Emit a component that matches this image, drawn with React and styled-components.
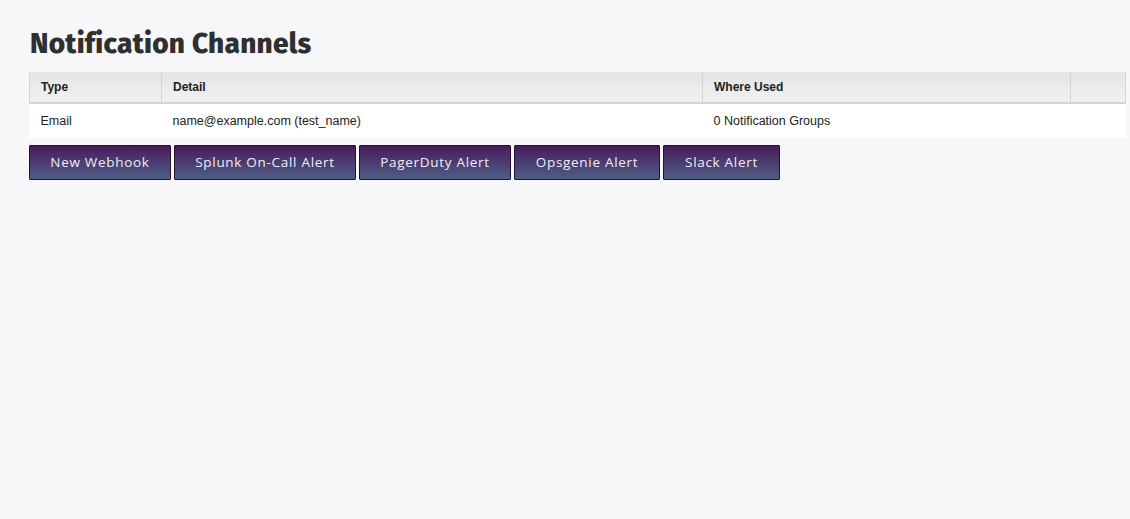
import React from 'react';
import styled, { createGlobalStyle } from 'styled-components';

const COLORS = {
  page: '#f7f7f9',
  text: '#2b2b2b',
  border: '#d4d4d4',
  headTop: '#e4e4e4',
  headBottom: '#f1f1f1',
  btnTop: '#4a1b5c',
  btnBottom: '#4d5e86',
  btnBorder: '#26122f',
};

const GlobalStyle = createGlobalStyle`
  html, body {
    margin: 0;
    padding: 0;
    background: ${COLORS.page};
  }
  body {
    font-family: "Liberation Sans", Arial, sans-serif;
    color: ${COLORS.text};
  }
`;

const Page = styled.main`
  padding: 26px 4px 0 29px;
  min-height: 519px;
  box-sizing: border-box;
`;

const Title = styled.h1`
  margin: 0 0 10px 1px;
  font-family: "Fira Sans", "Lato", sans-serif;
  font-weight: 800;
  font-size: 28px;
  line-height: 36px;
  color: #2f2f2f;
  letter-spacing: 0.3px;
`;

const Table = styled.table`
  width: 1097px;
  border-collapse: collapse;
  font-size: 12.5px;
  background: #fff;
`;

const HeadCell = styled.th`
  height: 31px;
  padding: 0 11px;
  text-align: left;
  font-weight: 700;
  font-size: 12px;
  color: #222;
  background: linear-gradient(${COLORS.headTop}, ${COLORS.headBottom});
  border-left: 1px solid ${COLORS.border};
  border-bottom: 2px solid ${COLORS.border};
  width: ${p => p.$w || 'auto'};
  box-sizing: border-box;
  &:last-child {
    border-right: 1px solid ${COLORS.border};
  }
`;

const Cell = styled.td`
  height: 33px;
  padding: 0 11px 1px;
  color: #222;
`;

const ButtonRow = styled.div`
  display: flex;
  gap: 3px;
  margin-top: 7px;
`;

const Button = styled.button`
  height: 35px;
  padding: 0 0 2px;
  border: 1px solid ${COLORS.btnBorder};
  border-radius: 1px;
  background: linear-gradient(${COLORS.btnTop}, ${COLORS.btnBottom});
  color: #efeef4;
  font-family: "Open Sans", "Liberation Sans", sans-serif;
  font-size: 13.5px;
  font-weight: 500;
  letter-spacing: 0.7px;
  cursor: pointer;
  box-sizing: border-box;
  width: ${p => p.$w}px;
`;

const channels = [
  { type: 'Email', detail: 'name@example.com (test_name)', used: '0 Notification Groups' },
];

const buttons = [
  { label: 'New Webhook', w: 142 },
  { label: 'Splunk On-Call Alert', w: 182 },
  { label: 'PagerDuty Alert', w: 152 },
  { label: 'Opsgenie Alert', w: 146 },
  { label: 'Slack Alert', w: 117 },
];

const App = () => (
  <>
    <GlobalStyle />
    <Page>
      <Title>Notification Channels</Title>
      <Table>
        <thead>
          <tr>
            <HeadCell $w='132px'>Type</HeadCell>
            <HeadCell $w='541px'>Detail</HeadCell>
            <HeadCell $w='368px'>Where Used</HeadCell>
            <HeadCell />
          </tr>
        </thead>
        <tbody>
          {channels.map(c => (
            <tr key={c.detail}>
              <Cell>{c.type}</Cell>
              <Cell>{c.detail}</Cell>
              <Cell>{c.used}</Cell>
              <Cell />
            </tr>
          ))}
        </tbody>
      </Table>
      <ButtonRow>
        {buttons.map(b => (
          <Button key={b.label} $w={b.w}>{b.label}</Button>
        ))}
      </ButtonRow>
    </Page>
  </>
);

export default App;
